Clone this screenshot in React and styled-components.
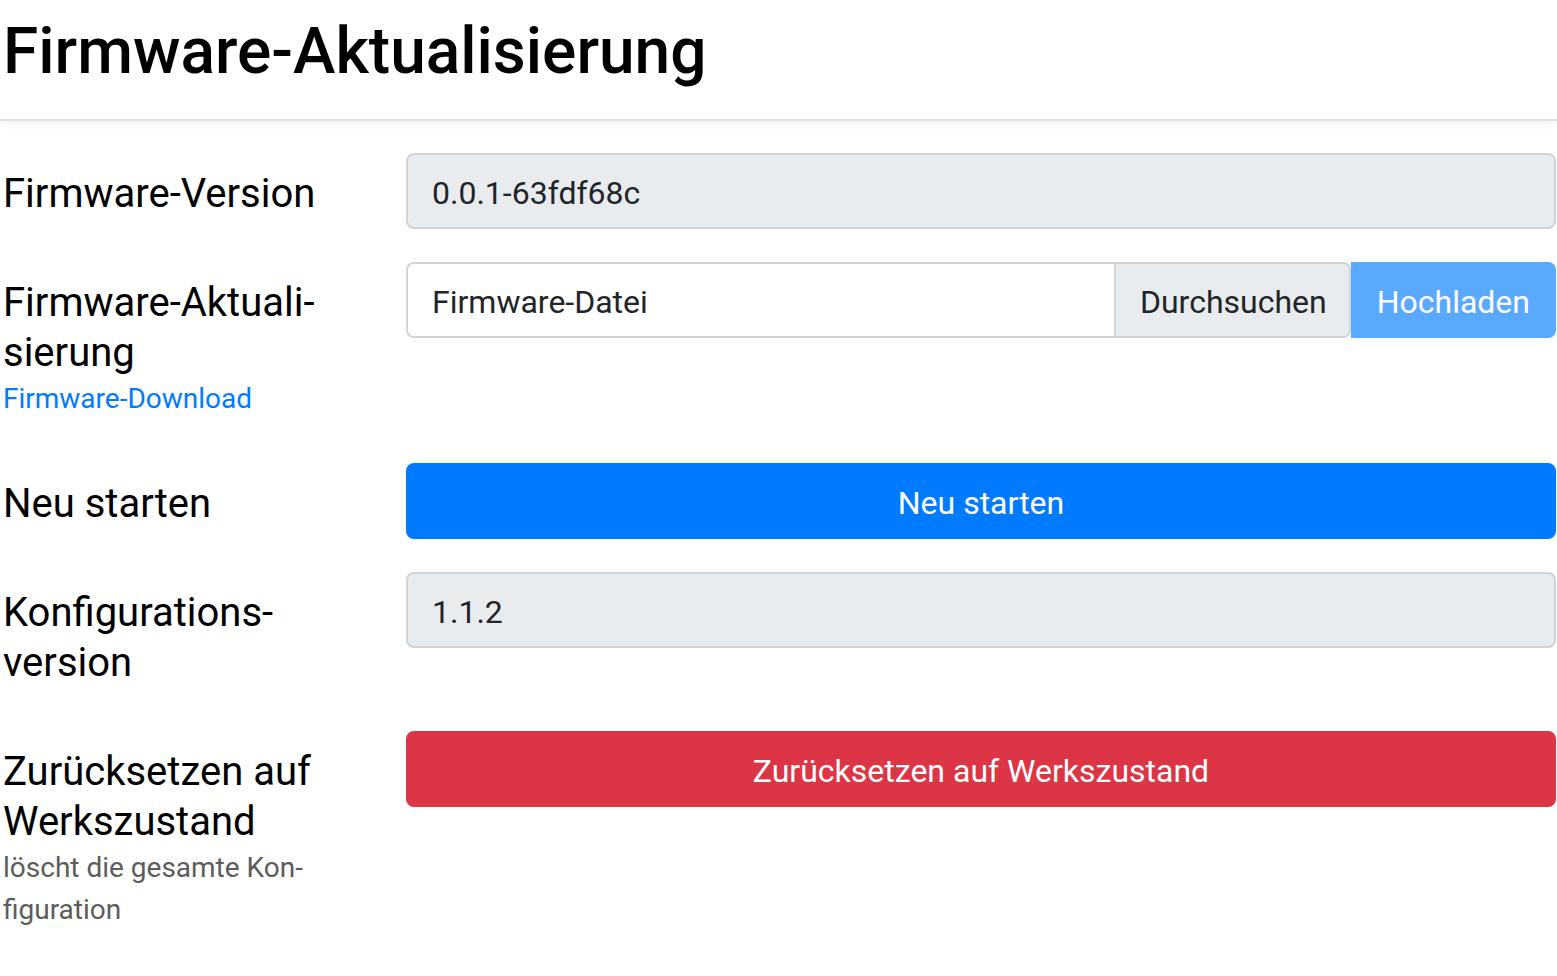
import React from "react";
import styled, { createGlobalStyle } from "styled-components";

const Global = createGlobalStyle`
  html, body { margin: 0; padding: 0; background: #fff; }
  body { font-family: Roboto, "Noto Sans", "Liberation Sans", sans-serif; color: #212529; }
  * { box-sizing: border-box; }
`;

const Header = styled.header`
  padding: 12px 0 27px 3px;
  border-bottom: 2px solid #dee2e6;
  box-shadow: 0 3px 8px rgba(0, 0, 0, 0.06);
`;

const Title = styled.h1`
  margin: 0;
  font-size: 64px;
  line-height: 80px;
  font-weight: 500;
  color: #000;
`;

const Form = styled.main`
  padding-top: 32px;
`;

const Row = styled.div`
  display: grid;
  grid-template-columns: 406px 1150px;
  align-items: start;
  margin-bottom: 31px;
`;

const Label = styled.div`
  width: 348px;
  padding: 16px 0 12px 3px;
  font-size: 40px;
  line-height: 50px;
  color: #000;
`;

const LabelText = styled.div``;

const Link = styled.a`
  display: block;
  font-size: 28px;
  line-height: 42px;
  color: #007bff;
  text-decoration: none;
`;

const Hint = styled.div`
  font-size: 28px;
  line-height: 42px;
  color: #5c5c5c;
`;

const Field = styled.div`
  height: 76px;
  padding: 14px 24px 10px;
  font-size: 32px;
  line-height: 48px;
  color: #212529;
  background: ${(p) => (p.$readonly ? "#e9ecef" : "#fff")};
  border: 2px solid #ced4da;
  border-radius: 8px;
`;

const InputGroup = styled.div`
  display: flex;
  height: 76px;
`;

const FileBox = styled.div`
  flex: 1;
  display: flex;
  border: 2px solid #ced4da;
  border-radius: 8px;
  overflow: hidden;
`;

const FileName = styled.div`
  flex: 1;
  padding: 14px 24px 10px;
  font-size: 32px;
  line-height: 48px;
  color: #212529;
  background: #fff;
`;

const Browse = styled.div`
  padding: 14px 22px 10px 24px;
  font-size: 32px;
  line-height: 48px;
  color: #212529;
  background: #e9ecef;
  border-left: 2px solid #ced4da;
`;

const Button = styled.button`
  display: block;
  width: ${(p) => (p.$block ? "100%" : "auto")};
  height: 76px;
  padding: 14px 24px 10px;
  font-family: inherit;
  font-size: 32px;
  line-height: 48px;
  color: #fff;
  background: ${(p) => p.$bg};
  border: 2px solid ${(p) => p.$bg};
  border-radius: ${(p) => p.$radius || "8px"};
  text-align: center;
  cursor: pointer;
`;

export default function App() {
  return (
    <>
      <Global />
      <Header>
        <Title>Firmware-Aktualisierung</Title>
      </Header>
      <Form>
        <Row>
          <Label>
            <LabelText>Firmware-Version</LabelText>
          </Label>
          <Field $readonly>0.0.1-63fdf68c</Field>
        </Row>
        <Row>
          <Label>
            <LabelText>Firmware-Aktuali{"\u00AD"}sierung</LabelText>
            <Link href="#">Firmware-Download</Link>
          </Label>
          <InputGroup>
            <FileBox>
              <FileName>Firmware-Datei</FileName>
              <Browse>Durchsuchen</Browse>
            </FileBox>
            <Button $bg="#59a9ff" $radius="0 8px 8px 0">
              Hochladen
            </Button>
          </InputGroup>
        </Row>
        <Row>
          <Label>
            <LabelText>Neu starten</LabelText>
          </Label>
          <Button $block $bg="#007bff">
            Neu starten
          </Button>
        </Row>
        <Row>
          <Label>
            <LabelText>Konfigurations-version</LabelText>
          </Label>
          <Field $readonly>1.1.2</Field>
        </Row>
        <Row>
          <Label>
            <LabelText>Zurücksetzen auf Werkszustand</LabelText>
            <Hint>löscht die gesamte Kon{"\u00AD"}figuration</Hint>
          </Label>
          <Button $block $bg="#dc3545">
            Zurücksetzen auf Werkszustand
          </Button>
        </Row>
      </Form>
    </>
  );
}
